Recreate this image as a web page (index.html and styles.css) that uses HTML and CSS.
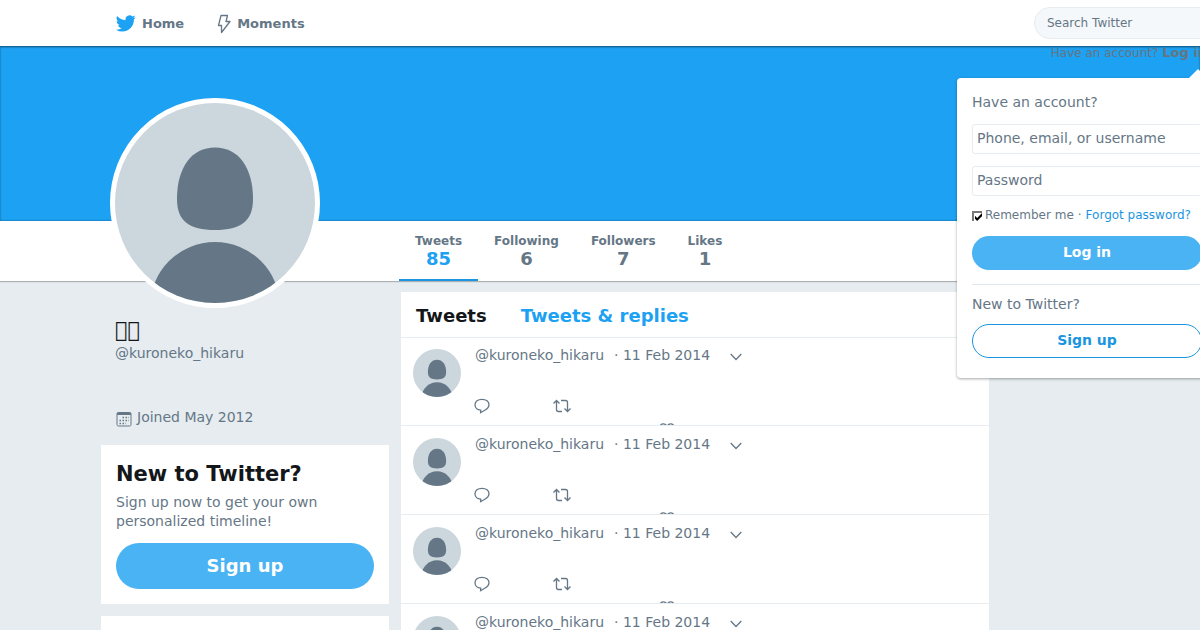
FILE: index.html
```html
<!DOCTYPE html>
<html lang="en">
<head>
<meta charset="utf-8">
<title>@kuroneko_hikaru | Twitter</title>
<link rel="stylesheet" href="styles.css">
</head>
<body>
<svg class="defs" aria-hidden="true">
  <symbol id="person" viewBox="0 0 200 200">
    <rect width="200" height="200" fill="#ccd6dd"/>
    <path d="M100 44.500C123 44.500 138 64 138 96C138 118 126 127 100 127S62 118 62 96C62 64 77 44.500 100 44.500Z" fill="#657786"/>
    <circle cx="100" cy="204" r="65" fill="#657786"/>
  </symbol>
  <symbol id="reply" viewBox="0 0 16 16">
    <path d="M6.700 12.200C3.300 12 1 9.700 1 6.800C1 3.600 3.900 1.300 8 1.300S15 3.600 15 6.600C15 9.200 13 11.200 10.300 12.500L6.600 14.700Z"/>
  </symbol>
  <symbol id="retweet" viewBox="0 0 20 16">
    <path d="M1.500 5.500L4.500 2.500L7.500 5.500M4.500 3V11.500Q4.500 13.500 6.500 13.500H10M9 2.500H13.500Q15.500 2.500 15.500 4.500V13M12.500 10.500L15.500 13.500L18.500 10.500"/>
  </symbol>
  <symbol id="heart" viewBox="0 0 16 14">
    <path d="M8 13C3 9.500 1 7 1 4.300C1 .2 6.500 -.2 8 3.500C9.500 -.2 15 .2 15 4.300C15 7 13 9.500 8 13Z"/>
  </symbol>
  <symbol id="caret" viewBox="0 0 12 8">
    <path d="M.7 1L6 6.500L11.300 1"/>
  </symbol>
</svg>

<header class="topbar">
  <nav class="topnav">
    <a href="#">
      <svg class="bird" viewBox="0 0 24 20" aria-hidden="true"><path d="M23.600 2.400c-.9.400-1.800.7-2.800.8 1-.6 1.800-1.600 2.100-2.700-.9.600-2 1-3.100 1.200A4.900 4.900 0 0 0 11.500 6.200C7.500 6 3.900 4 1.500 1.100A4.900 4.900 0 0 0 3 7.600c-.8 0-1.600-.2-2.200-.6 0 2.400 1.600 4.400 3.900 4.900-.7.200-1.500.2-2.200.1.600 2 2.400 3.400 4.600 3.400A9.900 9.900 0 0 1 0 17.400 13.900 13.900 0 0 0 7.500 19.600c9.100 0 14.300-7.700 14-14.600.8-.7 1.600-1.600 2.100-2.600Z"/></svg>
      <span>Home</span>
    </a>
    <a href="#">
      <svg class="bolt" viewBox="0 0 14 20" aria-hidden="true"><path d="M4 1.500H10.500L9 7.500H13L4.500 18.500V11.500H1.500Z"/></svg>
      <span>Moments</span>
    </a>
  </nav>
  <input class="search" type="search" placeholder="Search Twitter" aria-label="Search Twitter">
  <a class="account" href="#">Have an account? <b>Log in</b></a>
  <section class="dropdown">
    <p>Have an account?</p>
    <form>
      <input class="field" type="text" placeholder="Phone, email, or username" aria-label="Phone, email, or username">
      <input class="field" type="password" placeholder="Password" aria-label="Password">
      <div class="remember"><input id="remember" type="checkbox" checked><label for="remember">Remember me</label><span>·</span><a href="#">Forgot password?</a></div>
      <button class="primary" type="button">Log in</button>
    </form>
    <hr>
    <p class="prompt">New to Twitter?</p>
    <button class="outline" type="button">Sign up</button>
  </section>
</header>

<div class="banner"></div>
<nav class="stats">
  <a class="active" href="#"><span>Tweets</span><strong>85</strong></a>
  <a href="#"><span>Following</span><strong>6</strong></a>
  <a href="#"><span>Followers</span><strong>7</strong></a>
  <a href="#"><span>Likes</span><strong>1</strong></a>
</nav>

<main class="page">
  <aside class="sidebar">
    <div class="profile">
      <svg class="portrait" role="img" aria-label="Profile picture"><use href="#person"/></svg>
      <h1>&#xF0000;&#xF0000;</h1>
      <a class="handle" href="#">@kuroneko_hikaru</a>
      <div class="joined">
        <svg viewBox="0 0 16 16" aria-hidden="true"><rect x="1" y="1.500" width="14" height="13.500" rx="1.500" fill="none" stroke="#657786"/><path d="M1 1.500H15V4H1Z" fill="#657786"/><path d="M6.500 6.500H13M3.500 9.500H13M3.500 12.500H10" stroke="#657786" stroke-width="1.500" stroke-dasharray="1.500 1.500"/></svg>
        <span>Joined May 2012</span>
      </div>
    </div>
    <section class="card">
      <h2>New to Twitter?</h2>
      <p>Sign up now to get your own personalized timeline!</p>
      <button class="primary large" type="button">Sign up</button>
    </section>
    <section class="card"></section>
  </aside>

  <section class="timeline">
    <nav class="tabs"><b>Tweets</b><a href="#">Tweets &amp; replies</a></nav>
    <article class="tweet">
      <svg class="avatar" aria-hidden="true"><use href="#person"/></svg>
      <div class="content">
        <div class="meta"><span>@kuroneko_hikaru</span><span>· 11 Feb 2014</span><button type="button" aria-label="More"><svg class="caret"><use href="#caret"/></svg></button></div>
        <div class="actions"><button type="button" aria-label="Reply"><svg class="reply"><use href="#reply"/></svg></button><button type="button" aria-label="Retweet"><svg class="retweet"><use href="#retweet"/></svg></button><button class="like" type="button" aria-label="Like"><svg class="heart"><use href="#heart"/></svg></button></div>
      </div>
    </article>
    <article class="tweet">
      <svg class="avatar" aria-hidden="true"><use href="#person"/></svg>
      <div class="content">
        <div class="meta"><span>@kuroneko_hikaru</span><span>· 11 Feb 2014</span><button type="button" aria-label="More"><svg class="caret"><use href="#caret"/></svg></button></div>
        <div class="actions"><button type="button" aria-label="Reply"><svg class="reply"><use href="#reply"/></svg></button><button type="button" aria-label="Retweet"><svg class="retweet"><use href="#retweet"/></svg></button><button class="like" type="button" aria-label="Like"><svg class="heart"><use href="#heart"/></svg></button></div>
      </div>
    </article>
    <article class="tweet">
      <svg class="avatar" aria-hidden="true"><use href="#person"/></svg>
      <div class="content">
        <div class="meta"><span>@kuroneko_hikaru</span><span>· 11 Feb 2014</span><button type="button" aria-label="More"><svg class="caret"><use href="#caret"/></svg></button></div>
        <div class="actions"><button type="button" aria-label="Reply"><svg class="reply"><use href="#reply"/></svg></button><button type="button" aria-label="Retweet"><svg class="retweet"><use href="#retweet"/></svg></button><button class="like" type="button" aria-label="Like"><svg class="heart"><use href="#heart"/></svg></button></div>
      </div>
    </article>
    <article class="tweet">
      <svg class="avatar" aria-hidden="true"><use href="#person"/></svg>
      <div class="content">
        <div class="meta"><span>@kuroneko_hikaru</span><span>· 11 Feb 2014</span><button type="button" aria-label="More"><svg class="caret"><use href="#caret"/></svg></button></div>
        <div class="actions"><button type="button" aria-label="Reply"><svg class="reply"><use href="#reply"/></svg></button><button type="button" aria-label="Retweet"><svg class="retweet"><use href="#retweet"/></svg></button><button class="like" type="button" aria-label="Like"><svg class="heart"><use href="#heart"/></svg></button></div>
      </div>
    </article>
  </section>
</main>
</body>
</html>
```
FILE: styles.css
```css
* { box-sizing: border-box; }

html { overflow: hidden; }

body {
  margin: 0;
  background: #e6ecf0;
  color: #657786;
  font: 14px/20px "DejaVu Sans", sans-serif;
}

a { color: inherit; text-decoration: none; }
p, h1, h2 { margin: 0; }
svg { display: block; flex: none; }
button, input { font: inherit; color: inherit; }
button { padding: 0; border: 0; background: none; }
::placeholder { color: #657786; opacity: 1; }
.defs { position: absolute; width: 0; height: 0; }

/* Top bar */
.topbar {
  position: relative;
  z-index: 2;
  display: flex;
  align-items: center;
  justify-content: space-between;
  height: 46px;
  padding-left: 116px;
  background: #fff;
  box-shadow: 0 1px 2px rgba(0, 0, 0, 0.4);
}
.topnav { display: flex; gap: 33px; padding-top: 1px; font-size: 13px; font-weight: bold; }
.topnav a { display: flex; align-items: center; gap: 6px; }
.bird { width: 20px; height: 17px; fill: #1da1f2; }
.bolt { width: 14px; height: 20px; fill: none; stroke: #657786; stroke-width: 1.300; stroke-linejoin: round; }

.search {
  flex: none;
  width: 220px;
  height: 32px;
  margin-right: -54px;
  padding: 0 12px;
  border: 1px solid #e6ecf0;
  border-radius: 16px;
  background: #f5f8fa;
  font-size: 12px;
  appearance: none;
}
.account {
  position: absolute;
  top: 43px;
  right: -7px;
  color: #66757f;
  font-size: 12px;
  white-space: nowrap;
}
.account b { font-size: 13px; }

/* Login dropdown */
.dropdown {
  position: absolute;
  top: 78px;
  right: -17px;
  width: 260px;
  padding: 14px 15px 20px;
  border-radius: 4px;
  background: #fff;
  box-shadow: 0 1px 3px rgba(0, 0, 0, 0.35);
}
.dropdown::before {
  content: "";
  position: absolute;
  top: -9px;
  right: 10px;
  border: 9px solid transparent;
  border-top: 0;
  border-bottom-color: #fff;
}
.field {
  display: block;
  width: 100%;
  height: 30px;
  margin: 12px 0;
  padding: 0 4px 2px;
  border: 1px solid #e6ecf0;
  border-radius: 3px;
  background: #fff;
}
.remember { display: flex; align-items: center; gap: 4px; margin: -3px 0 11px; font-size: 12px; }
.remember label { margin-left: -1px; }
.remember a { color: #1b95e0; white-space: nowrap; }
.remember input {
  width: 10px;
  height: 10px;
  margin: 2px 0 0;
  border: 2px solid #777;
  border-width: 2px 0 0 2px;
  appearance: none;
}
.remember input:checked::before {
  content: "";
  display: block;
  width: 8px;
  height: 8px;
  background: #000;
  clip-path: polygon(12% 35%, 40% 62%, 100% 0, 100% 40%, 40% 100%, 12% 72%);
}
.primary, .outline {
  display: block;
  width: 100%;
  height: 34px;
  padding-bottom: 2px;
  border-radius: 50px;
  font-weight: bold;
}
.primary { background: #4ab3f4; color: #fff; }
.outline { border: 1px solid #1b95e0; color: #1b95e0; }
.dropdown hr { margin: 14px 0 9px; border: 0; border-top: 1px solid #e1e8ed; }
.prompt { margin-bottom: 10px; }

/* Profile header */
.banner {
  height: 175px;
  background: #1da1f2;
  box-shadow: inset 0 0 2px rgba(0, 0, 0, 0.5);
}
.stats {
  display: flex;
  height: 60px;
  padding-left: 399px;
  background: #fff;
  box-shadow: 0 1px 1px rgba(0, 0, 0, 0.25);
  text-align: center;
}
.stats a { padding: 12px 16px 0; border-bottom: 2px solid transparent; }
.stats span { display: block; font-size: 12px; font-weight: bold; line-height: 16px; }
.stats strong { display: block; font-size: 18px; line-height: 20px; }
.stats .active { border-color: #1b95e0; }
.stats .active strong { color: #1da1f2; }

/* Columns */
.page {
  display: grid;
  grid-template-columns: 288px minmax(0, 588px);
  gap: 12px;
  padding-left: 101px;
}
.profile { margin-bottom: 18px; padding-left: 14px; }
.portrait {
  position: relative;
  width: 210px;
  height: 210px;
  margin: -183px 0 10px -5px;
  border: 5px solid #fff;
  border-radius: 50%;
  background: #fff;
}
.profile h1 {
  color: #14171a;
  font-size: 21px;
  font-weight: normal;
  line-height: 25px;
}
.handle { display: block; }
.joined { display: flex; align-items: center; gap: 5px; margin-top: 44px; padding-left: 1px; }
.joined svg { width: 16px; height: 16px; margin-top: 3px; }

.card { min-height: 60px; margin-bottom: 12px; padding: 15px; background: #fff; }
.card h2 { color: #14171a; font-size: 21px; line-height: 28px; }
.card p { margin: 5px 0 12px; line-height: 19px; }
.large { height: 46px; padding: 0; font-size: 18px; }

/* Timeline */
.timeline { margin-top: 11px; background: #fff; }
.tabs {
  display: flex;
  gap: 34px;
  margin-bottom: -1px;
  padding: 13px 15px 11px;
  border-bottom: 1px solid #e6ecf0;
  font-size: 18px;
  font-weight: bold;
  line-height: 21px;
}
.tabs b { color: #14171a; }
.tabs a { color: #1da1f2; }
.tweet {
  display: flex;
  gap: 14px;
  height: 89px;
  padding: 12px 12px 0;
  border-bottom: 1px solid #e6ecf0;
  overflow: hidden;
}
.avatar { width: 48px; height: 48px; border-radius: 50%; }
.meta { display: flex; gap: 10px; margin-top: -4px; }
.meta button { margin: 4px 0 0 10px; }
.actions { display: flex; margin-top: 33px; }
.actions svg, .caret { fill: none; stroke: #657786; stroke-width: 1.300; }
.actions button { width: 78px; height: 16px; }
.caret { width: 12px; height: 8px; }
.reply { width: 16px; height: 16px; margin-left: -1px; }
.retweet { width: 20px; height: 16px; margin-left: -1px; }
.actions .like { margin: 24px 0 0 28px; }
.heart { width: 16px; height: 14px; }
```
